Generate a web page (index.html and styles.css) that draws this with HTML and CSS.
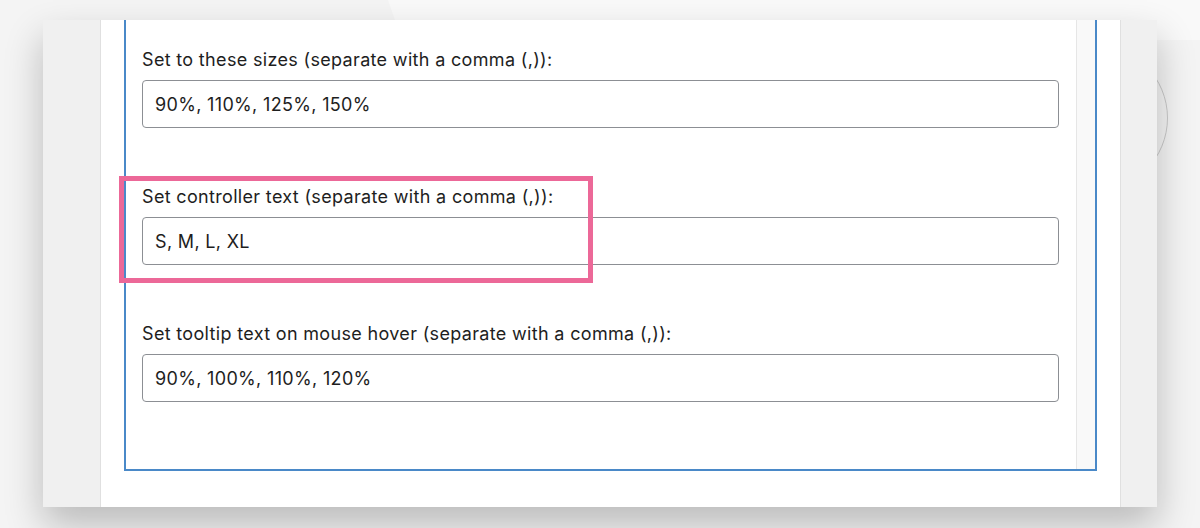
FILE: index.html
```html
<!DOCTYPE html>
<html lang="en">
<head>
  <meta charset="UTF-8" />
  <meta name="viewport" content="width=device-width, initial-scale=1.0" />
  <title>Font size controller settings</title>
  <link rel="stylesheet" href="styles.css">
</head>
<body>
  <div class="backdrop-shape"></div>
  <div class="backdrop-ring"></div>

  <div class="window">
    <div class="gutter gutter-left"></div>

    <div class="panel">
      <div class="settings-box">
        <div class="settings-fields">
          <div class="field">
            <label for="sizes">Set to these sizes (separate with a comma (,)):</label>
            <input id="sizes" type="text" value="90%, 110%, 125%, 150%">
          </div>

          <div class="field highlighted">
            <label for="controller">Set controller text (separate with a comma (,)):</label>
            <input id="controller" type="text" value="S, M, L, XL">
            <div class="highlight"></div>
          </div>

          <div class="field">
            <label for="tooltip">Set tooltip text on mouse hover (separate with a comma (,)):</label>
            <input id="tooltip" type="text" value="90%, 100%, 110%, 120%">
          </div>
        </div>
        <div class="scroll-track"></div>
      </div>
    </div>

    <div class="gutter gutter-right"></div>
  </div>
</body>
</html>
```

FILE: styles.css
```css
html, body {
  margin: 0;
  height: 100%;
}

body {
  font-family: Inter, "Liberation Sans", sans-serif;
  background: #f4f4f4;
  overflow: hidden;
  position: relative;
  padding-top: 20px;
  box-sizing: border-box;
}

/* faint shapes in the background behind the screenshot */
.backdrop-shape {
  position: absolute;
  top: 0;
  left: 0;
  width: 100%;
  height: 40px;
  background: #f9f9f9;
  clip-path: polygon(388px 0, 100% 0, 100% 100%, 402px 100%);
}

.backdrop-ring {
  position: absolute;
  left: 1020px;
  top: 44px;
  width: 146px;
  height: 146px;
  border: 1px solid #c9c9c9;
  border-radius: 50%;
}

.window {
  position: relative;
  display: flex;
  margin: 0 43px;
  height: 487px;
  overflow: hidden;
  box-shadow: 0 18px 36px rgba(0, 0, 0, 0.24);
}

.gutter {
  background: #f0f0f0;
}

.gutter-left {
  width: 57px;
  border-right: 1px solid #e0e0e0;
}

.gutter-right {
  width: 36px;
  border-left: 1px solid #e0e0e0;
}

.panel {
  flex: 1;
  background: #fff;
  padding: 0 23px;
}

.settings-box {
  display: flex;
  height: 451px;
  box-sizing: border-box;
  border: 2px solid #4a89c8;
  border-top: none;
}

.settings-fields {
  flex: 1;
  padding: 28px 17px 0 16px;
}

.scroll-track {
  width: 18px;
  background: #f9f9f9;
  border-left: 1px solid #e6e6e6;
}

.field {
  position: relative;
  display: flex;
  flex-direction: column;
  gap: 8px;
  margin-bottom: 57px;
}

.field label {
  font-size: 18px;
  line-height: 24px;
  letter-spacing: 0.33px;
  color: #1e1e1e;
}

.field input {
  height: 48px;
  box-sizing: border-box;
  border: 1px solid #8c8f94;
  border-radius: 4px;
  padding: 0 12px;
  font-family: inherit;
  font-size: 18px;
  letter-spacing: 0.33px;
  color: #1e1e1e;
  background: #fff;
}

.highlight {
  position: absolute;
  left: -23px;
  top: -9px;
  width: 474px;
  height: 107px;
  box-sizing: border-box;
  border: 5px solid #ec6898;
}
```
